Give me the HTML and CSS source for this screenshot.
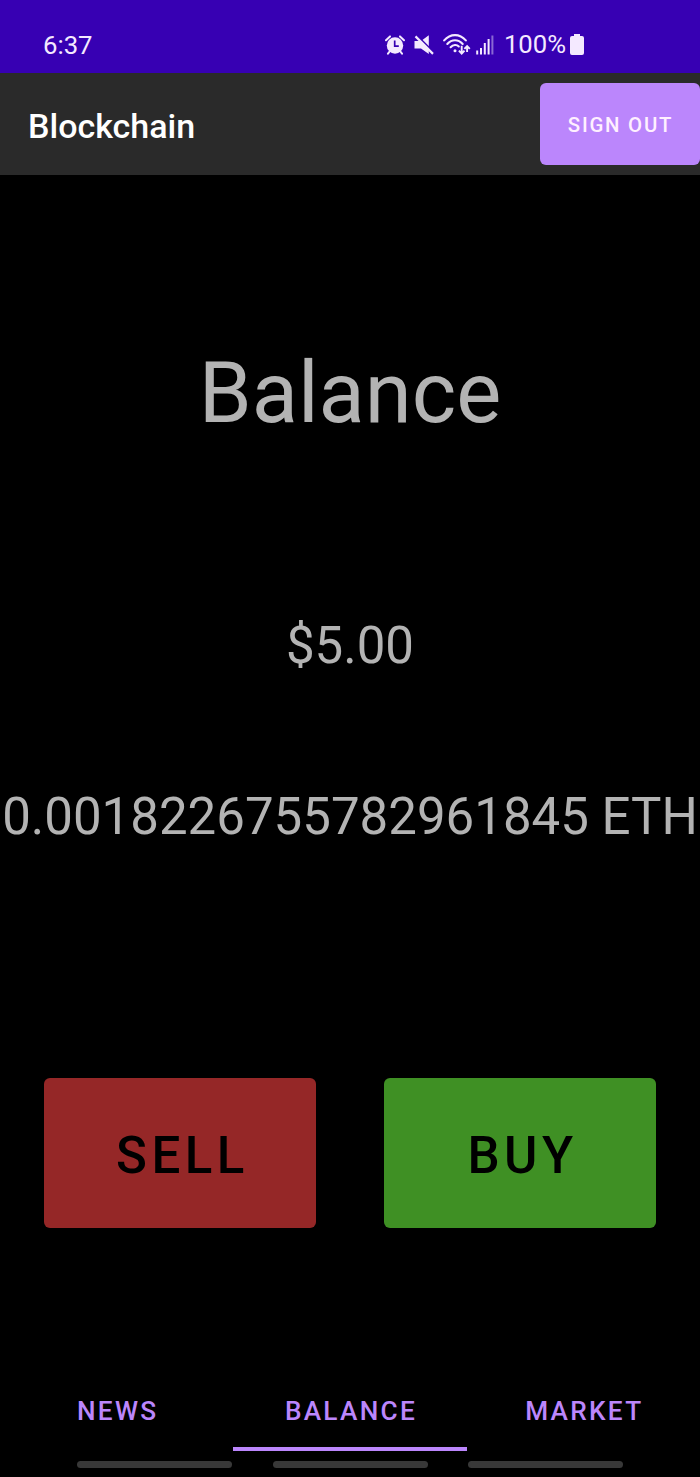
FILE: index.html
```html
<!DOCTYPE html>
<html lang="en">
<head>
    <meta charset="UTF-8">
    <meta name="viewport" content="width=device-width, initial-scale=1.0">
    <title>Blockchain - Balance</title>
    <link rel="stylesheet" href="styles.css">
</head>
<body>
    <div class="status-bar">
        <span class="time">6:37</span>
        <div class="status-icons">
            <svg class="alarm" width="20" height="20" viewBox="0 0 20 20">
                <path d="M1 5.2 5 1.4M19 5.2 15 1.4" stroke="#f4e9ff" stroke-width="2" stroke-linecap="round"/>
                <path d="M4.6 16.5 3 18.6M15.4 16.5 17 18.6" stroke="#f4e9ff" stroke-width="2" stroke-linecap="round"/>
                <circle cx="10" cy="10.5" r="8.2" fill="#f4e9ff"/>
                <path d="M9.7 5.6V11.2H13.8" fill="none" stroke="#3700b3" stroke-width="1.7"/>
            </svg>
            <svg class="mute" width="20" height="20" viewBox="0 0 20 20">
                <path d="M.5 6H7L14.8.3V19L7 13.6H.5Z" fill="#f4e9ff"/>
                <path d="M3 .4 20 17.4" stroke="#3700b3" stroke-width="1.6"/>
                <path d="M1.5 1.4 19 18.9" stroke="#f4e9ff" stroke-width="2.2"/>
            </svg>
            <svg class="wifi" width="28" height="21" viewBox="0 0 28 21">
                <g fill="none" stroke="#f4e9ff" stroke-width="2.1" stroke-linecap="round">
                    <path d="M1.2 6.4C7.4-.6 16.6-.6 22.8 6.4"/>
                    <path d="M4.3 10C8.8 4.9 15.2 4.9 19.7 10"/>
                    <path d="M7.6 13.2C10.2 10.4 13.8 10.4 15.8 12.4"/>
                </g>
                <circle cx="12" cy="16.7" r="1.5" fill="#f4e9ff"/>
                <path d="M18.7 11.8V19.3M15.9 16.7 18.7 19.6 21.5 16.7M24.1 18V12.2M21.4 14.8 24.1 12 26.8 14.8" fill="none" stroke="#f4e9ff" stroke-width="1.9"/>
            </svg>
            <svg class="signal" width="18" height="20" viewBox="0 0 18 20">
                <path d="M1.2 15.5V19.5M5 13V19.5M8.8 8V19.5M12.6 4V19.5" stroke="#f4e9ff" stroke-width="2"/>
                <path d="M16.4.5V19.5" stroke="#8a68d4" stroke-width="2"/>
            </svg>
            <span class="percent">100%</span>
            <svg class="battery" width="14" height="21" viewBox="0 0 14 21">
                <path d="M4 0H10V2H12Q14 2 14 4V19Q14 21 12 21H2Q0 21 0 19V4Q0 2 2 2H4Z" fill="#f4e9ff"/>
            </svg>
        </div>
    </div>

    <div class="header">
        <h1>Blockchain</h1>
        <button class="sign-out">SIGN OUT</button>
    </div>

    <div class="content">
        <h2>Balance</h2>
        <p class="usd">$5.00</p>
        <p class="eth">0.0018226755782961845 ETH</p>
        <div class="actions">
            <button class="sell">SELL</button>
            <button class="buy">BUY</button>
        </div>
    </div>

    <div class="tabs">
        <a class="tab">NEWS</a>
        <a class="tab active">BALANCE</a>
        <a class="tab">MARKET</a>
    </div>
    <div class="gesture-bar">
        <span></span>
        <span></span>
        <span></span>
    </div>
</body>
</html>
```
FILE: styles.css
```css
* {
    box-sizing: border-box;
}
body {
    margin: 0;
    height: 1477px;
    background: #000;
    font-family: Roboto, sans-serif;
    display: flex;
    flex-direction: column;
    overflow: hidden;
}
h1, h2, p {
    margin: 0;
    font-weight: 400;
}
button {
    border: none;
    padding: 0;
    font-family: inherit;
    font-weight: 500;
    cursor: pointer;
}
.status-bar {
    height: 73px;
    padding: 30px 116px 0 43px;
    background: #3700b3;
    color: #f4e9ff;
    font-size: 25.7px;
    line-height: 31px;
    display: flex;
    justify-content: space-between;
}
.status-icons {
    display: flex;
    align-items: center;
    height: 29px;
}
.mute {
    margin-left: 9px;
}
.wifi {
    margin-left: 9px;
}
.signal {
    margin-left: 5px;
}
.percent {
    margin-left: 10px;
}
.battery {
    margin-left: 4px;
}
.header {
    height: 102px;
    padding-left: 28px;
    background: #2a2a2a;
    display: flex;
    justify-content: space-between;
    align-items: center;
}
.header h1 {
    color: #fff;
    font-size: 34px;
    font-weight: 500;
    line-height: 40px;
    padding-top: 3px;
}
.sign-out {
    width: 160px;
    height: 82px;
    padding: 2px 0 0 1px;
    border-radius: 6px;
    background: #bb86fc;
    color: #fff0ff;
    font-size: 20.4px;
    letter-spacing: 1.75px;
}
.content {
    flex: 1;
    padding-top: 168px;
    color: #b3b3b3;
    text-align: center;
}
.content h2 {
    font-size: 85px;
    line-height: 100px;
}
.usd {
    margin-top: 173px;
    font-size: 51px;
    line-height: 60px;
}
.eth {
    margin-top: 111px;
    font-size: 51px;
    line-height: 60px;
    white-space: nowrap;
}
.actions {
    margin-top: 231px;
    padding: 0 44px;
    display: flex;
    justify-content: space-between;
}
.actions button {
    width: 272px;
    height: 150px;
    padding: 4px 0 0 5px;
    border-radius: 6px;
    color: #000;
    font-size: 51px;
    letter-spacing: 4.5px;
}
.actions .sell {
    background: #952727;
}
.actions .buy {
    background: #3f9024;
}
.tabs {
    height: 78px;
    display: grid;
    grid-template-columns: repeat(3, 1fr);
}
.tab {
    padding: 3px 0 0 2px;
    border-bottom: 4px solid transparent;
    color: #bb86fc;
    font-size: 26.2px;
    font-weight: 500;
    line-height: 71px;
    letter-spacing: 2.3px;
    text-align: center;
}
.tab.active {
    border-color: #bb86fc;
}
.gesture-bar {
    height: 26px;
    padding: 10px 77px 0;
    display: flex;
    justify-content: space-between;
}
.gesture-bar span {
    width: 155px;
    height: 7px;
    border-radius: 4px;
    background: #383838;
}
```
